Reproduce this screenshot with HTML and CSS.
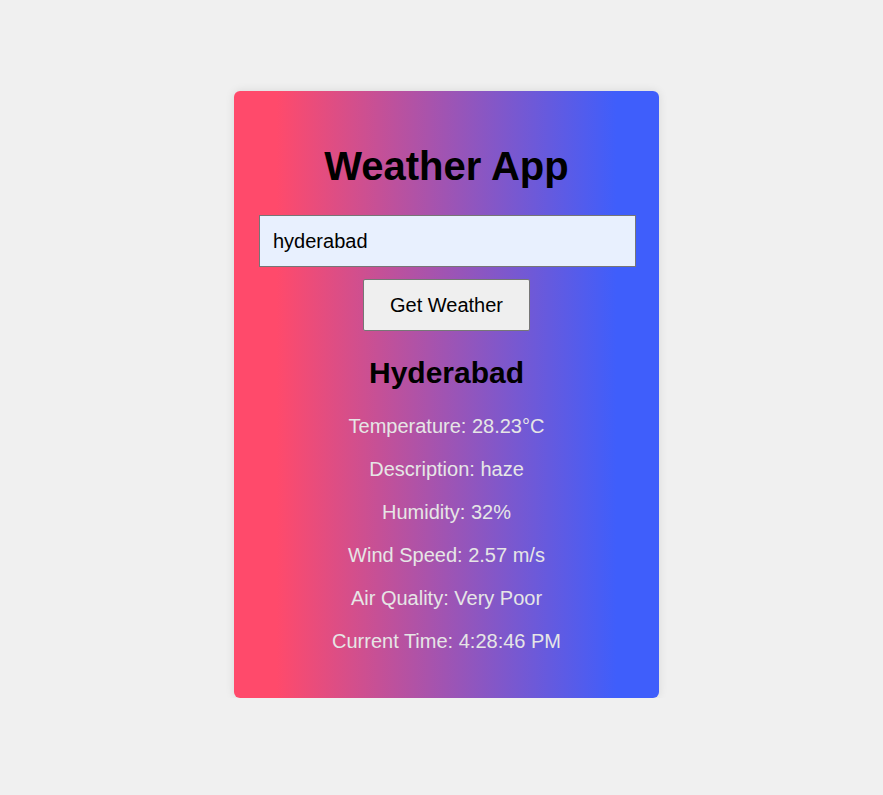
FILE: index.html
```html
<!DOCTYPE html>
<html lang="en">
<head>
<meta charset="UTF-8">
<title>Weather App</title>
<link rel="stylesheet" href="styles.css">
</head>
<body>
<div class="page">
  <div class="card">
    <h1 class="title">Weather App</h1>
    <input class="city-input" type="text" value="hyderabad">
    <button class="get-btn">Get Weather</button>
    <div class="info">
      <h2 class="city">Hyderabad</h2>
      <p>Temperature: 28.23°C</p>
      <p>Description: haze</p>
      <p>Humidity: 32%</p>
      <p>Wind Speed: 2.57 m/s</p>
      <p>Air Quality: Very Poor</p>
      <p>Current Time: 4:28:46 PM</p>
    </div>
  </div>
</div>
</body>
</html>
```

FILE: styles.css
```css
html, body {
  margin: 0;
  padding: 0;
  background: #f0f0f0;
  font-family: "Liberation Sans", Arial, sans-serif;
}

.page {
  display: flex;
  justify-content: center;
  padding: 91px 0 0 10px;
}

.card {
  width: 425px;
  box-sizing: border-box;
  padding: 25px 24px;
  border-radius: 6px;
  background: linear-gradient(to right, #ff4a6b 10%, #3f5efb 90%);
  box-shadow: 0 0 10px rgba(0, 0, 0, 0.1);
  display: flex;
  flex-direction: column;
  align-items: center;
  text-align: center;
}

.title {
  font-size: 40px;
  font-weight: bold;
  color: #000;
  margin: 27px 0 26px;
  line-height: 46px;
}

.city-input {
  width: 100%;
  height: 52px;
  box-sizing: border-box;
  margin: 0 -1px 0 1px;
  padding: 0 13px;
  font-family: "Liberation Sans", Arial, sans-serif;
  font-size: 20px;
  color: #000;
  background: #e8f0fe;
  border: 1px solid #767676;
  border-radius: 0;
  outline: none;
}

.get-btn {
  margin-top: 12px;
  height: 52px;
  padding: 0 26px;
  font-family: "Liberation Sans", Arial, sans-serif;
  font-size: 20px;
  color: #000;
  background: #efefef;
  border: 1px solid #767676;
  border-radius: 2px;
}

.info {
  width: 100%;
  font-size: 20px;
}

.city {
  font-size: 30px;
  font-weight: bold;
  color: #000;
  margin: 24px 0 25px;
  line-height: 35px;
}

.info p {
  margin: 20px 0;
  line-height: 23px;
  color: #e6e6e6;
}
```
